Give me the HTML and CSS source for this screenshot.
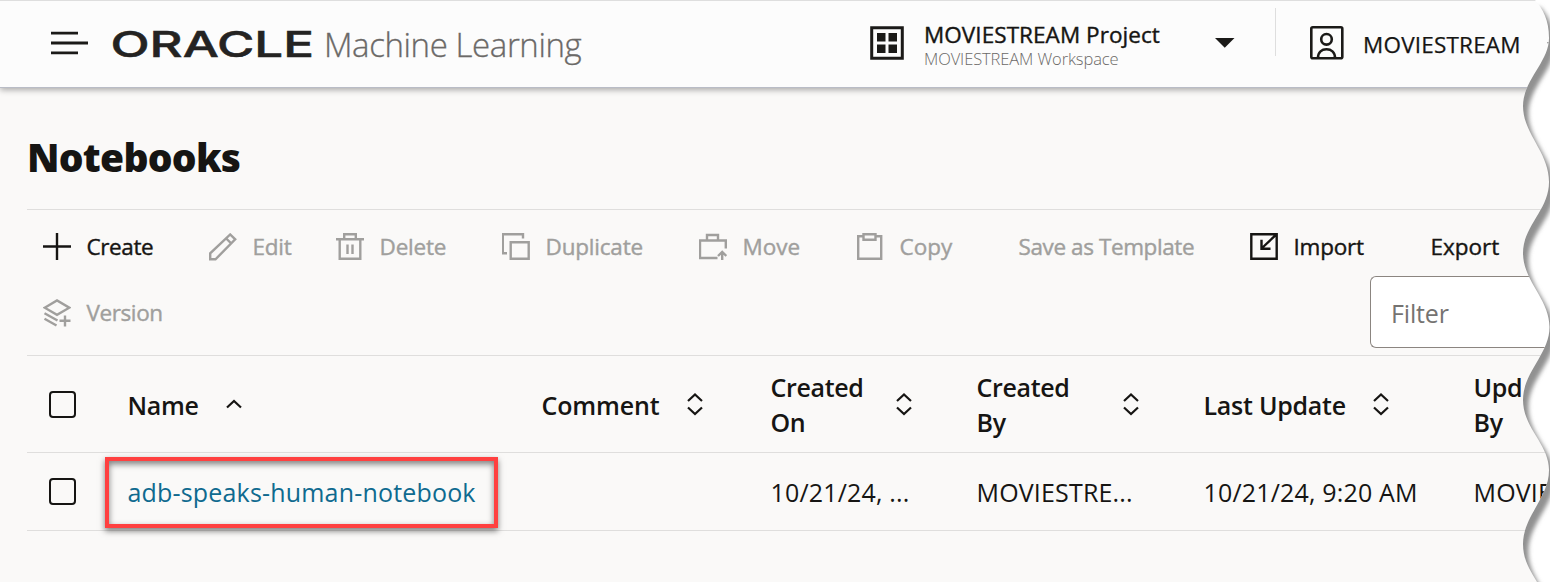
FILE: index.html
```html
<!DOCTYPE html>
<html lang="en">
<head>
<meta charset="utf-8">
<title>Oracle Machine Learning - Notebooks</title>
<link rel="stylesheet" href="styles.css">
</head>
<body>
<header class="topbar">
  <svg class="menu" width="38" height="24" viewBox="0 0 38 24"><path d="M0 2.200h27M0 12h37M0 21.900h27" stroke="#1b1a18" stroke-width="2.800" fill="none"/></svg>
  <svg class="logo" width="202" height="30" viewBox="0 0 202 30"><text x="-1.500" y="28" textLength="203.500" lengthAdjust="spacingAndGlyphs">ORACLE</text></svg>
  <span class="product">Machine Learning</span>
  <div class="project">
    <svg width="34" height="34" viewBox="0 0 34 34"><path d="M1.700 1.700h30.600v30.600H1.700z" fill="none" stroke="#1b1a18" stroke-width="3"/><path d="M7 7h8.500v8.500H7zM18.500 7h8.500v8.500h-8.500zM7 18.500h8.500V27H7zM18.500 18.500h8.500V27h-8.500z" fill="#1b1a18"/></svg>
    <div class="project-text">
      <div class="project-name">MOVIESTREAM Project</div>
      <div class="workspace">MOVIESTREAM Workspace</div>
    </div>
    <svg class="caret" width="20" height="10" viewBox="0 0 20 10"><path d="M0 0h19.500L9.750 9.800z" fill="#1b1a18"/></svg>
  </div>
  <div class="user">
    <svg width="34" height="34" viewBox="0 0 34 34" fill="none" stroke="#1b1a18" stroke-width="2.600"><rect x="1.300" y="1.300" width="31" height="31" rx="1.500"/><circle cx="16.500" cy="13.300" r="5.300"/><path d="M8 32c0-6 4-8.800 8.500-8.800s8.500 2.800 8.500 8.800"/></svg>
    <span class="user-name">MOVIESTREAM</span>
    <svg class="user-caret" width="20" height="10" viewBox="0 0 20 10"><path d="M0 0h19.500L9.750 9.800z" fill="#1b1a18"/></svg>
  </div>
</header>
<main class="page">
  <h1 class="title">Notebooks</h1>
  <div class="toolbar">
    <div class="tool on create"><svg width="28" height="28"><path d="M14 0v27M0 13.500h28"/></svg><span>Create</span></div>
    <div class="tool"><svg width="28" height="28"><path d="M1.200 26.300v-6L21.200 1.500l5 4.800L6.500 26.300zM17.200 5.500l5 4.800"/></svg><span>Edit</span></div>
    <div class="tool"><svg width="28" height="28"><path d="M0 6.200h28M3.700 6.500v19.300h20.600V6.500M8.200 6V1.200h11.600V6M11.500 11.500V21M16.500 11.500V21"/></svg><span>Delete</span></div>
    <div class="tool"><svg width="28" height="28"><path d="M5 20.300H.8V1.200h20.200V5.500M8.700 9.200h18v16.600h-18z"/></svg><span>Duplicate</span></div>
    <div class="tool loose"><svg width="28" height="28"><path d="M18.500 25H1V7.500h25.800V15.500M8 7V2h11v5M23.200 27v-7M19 23l4.200-4 4.200 4"/></svg><span>Move</span></div>
    <div class="tool loose"><svg width="28" height="28"><path d="M7.500 3.200H2.200v22.600h23V3.200h-5.200M7.500 1.200h12v5.600h-12z"/></svg><span>Copy</span></div>
    <div class="tool template"><span>Save as Template</span></div>
    <div class="tool on"><svg width="28" height="28"><path d="M1.300 1.300h25.400v24.400H1.300zM26.500 1.300L11.500 15.500M11.500 6.700v9H20.500"/></svg><span>Import</span></div>
    <div class="tool on export"><span>Export</span></div>
    <div class="tool version"><svg width="28" height="28"><path d="M1.700 8.700L14 1.500l12.300 7.200L14 15.900zM1.500 14.200l13 7.300M1.500 19.700l12 6.800M16.500 21.800h11M22 16.500v11"/></svg><span>Version</span></div>
    <div class="filter">Filter</div>
  </div>
  <div class="grid head">
    <div><i class="check"></i></div>
    <div class="cell name"><span>Name</span><svg class="sort" width="16" height="24"><path d="M1 15.500l7-6.500 7 6.500"/></svg></div>
    <div class="cell comment"><span>Comment</span><svg class="sort" width="16" height="24"><path d="M1 9l7-6.500L15 9M1 15.500l7 6.500 7-6.500"/></svg></div>
    <div class="cell created-on"><div>Created<br>On</div><svg class="sort" width="16" height="24"><path d="M1 9l7-6.500L15 9M1 15.500l7 6.500 7-6.500"/></svg></div>
    <div class="cell created-by"><div>Created<br>By</div><svg class="sort" width="16" height="24"><path d="M1 9l7-6.500L15 9M1 15.500l7 6.500 7-6.500"/></svg></div>
    <div class="cell last"><span>Last Update</span><svg class="sort" width="16" height="24"><path d="M1 9l7-6.500L15 9M1 15.500l7 6.500 7-6.500"/></svg></div>
    <div class="cell"><div>Upd<br>By</div></div>
  </div>
  <div class="grid row">
    <div><i class="check"></i></div>
    <div class="link">adb-speaks-human-notebook<div class="highlight"></div></div>
    <div></div>
    <div>10/21/24, ...</div>
    <div>MOVIESTRE...</div>
    <div>10/21/24, 9:20 AM</div>
    <div>MOVIE</div>
  </div>
</main>
<svg class="torn" width="50" height="582" viewBox="0 0 50 582">
  <defs>
    <clipPath id="paper"><path d="M35 0C43 9 49 20 49 38C49 62 23 80 23 106C23 134 49 152 49 182C49 210 23 226 23 253C23 281 49.500 299 49.500 327C49.500 354 23 372 23 400C23 428 49 444 49 470C49 498 23 516 23 544C23 560 30 570 37 582H50V0z"/></clipPath>
    <filter id="soft" x="-50%" y="-5%" width="200%" height="110%"><feGaussianBlur stdDeviation="2"/></filter>
  </defs>
  <g clip-path="url(#paper)">
    <path d="M0 0h50v582H0z" fill="#fff"/>
    <path filter="url(#soft)" transform="translate(5.500 7.500)" fill="#919191" d="M-40 0H35C43 9 49 20 49 38C49 62 23 80 23 106C23 134 49 152 49 182C49 210 23 226 23 253C23 281 49.500 299 49.500 327C49.500 354 23 372 23 400C23 428 49 444 49 470C49 498 23 516 23 544C23 560 30 570 37 582H-40z"/>
  </g>
</svg>
</body>
</html>
```
FILE: styles.css
```css
* { box-sizing: border-box; }
body {
  margin: 0;
  width: 1550px;
  height: 582px;
  overflow: hidden;
  background: #faf9f8;
  color: #161513;
  font-family: "Open Sans", "Noto Sans", sans-serif;
  position: relative;
}
svg { display: block; flex: none; }

/* Top bar */
.topbar {
  height: 88px;
  display: flex;
  align-items: flex-start;
  padding-left: 51px;
  background: #fcfcfc;
  border-top: 1px solid #dedede;
  border-bottom: 1px solid #b9bcc6;
  box-shadow: 0 2px 6px rgba(0, 0, 0, .32);
  white-space: nowrap;
}
.menu { margin-top: 30px; }
.logo { margin: 28px 0 0 23px; overflow: visible; }
.logo text { font: 500 36px "Inter", sans-serif; fill: #242322; stroke: #242322; stroke-width: .5px; }
.product {
  width: 546px;
  margin: 24px 0 0 10px;
  font-size: 33px;
  line-height: 40px;
  font-weight: 300;
  letter-spacing: -.4px;
  color: #6b6967;
  -webkit-text-stroke: .3px #6b6967;
}
.project { display: flex; margin-top: 25px; width: 405px; }
.project-text { width: 291px; margin: -4px 0 0 20px; }
.project-name { font-size: 22.500px; line-height: 26px; letter-spacing: .06px; -webkit-text-stroke: .4px #161513; }
.workspace { font-size: 16.500px; line-height: 22px; font-weight: 300; letter-spacing: -.1px; color: #6b6967; }
.caret { margin-top: 12px; }
.user { display: flex; padding: 18px 0 12px 34px; width: 274px; height: 48px; margin-top: 7px; border-left: 1px solid #dedede; overflow: visible; }
.user-name { font-size: 22.500px; line-height: 30px; margin: 4px 0 0 19px; width: 184px; letter-spacing: .2px; -webkit-text-stroke: .25px #161513; }
.user-caret { width: 2px; margin-top: 12px; }

/* Page heading and toolbar */
.page { padding: 45px 0 0 27px; }
.title { margin: 0; height: 76px; font-size: 39px; line-height: 48px; font-weight: 800; letter-spacing: -.76px; }
.toolbar {
  display: grid;
  grid-template-columns: 166px 127px 166px 197px 157px 162px 232px 180px minmax(0, 1fr);
  grid-template-rows: 66px 79px;
  border-top: 1px solid #dfdedd;
  padding-left: 16px;
}
.tool {
  display: flex;
  gap: 16px;
  height: 28px;
  margin-top: 23px;
  line-height: 28px;
  font-size: 22.500px;
  letter-spacing: -.2px;
  color: #a09f9d;
  white-space: nowrap;
  -webkit-text-stroke: .4px currentColor;
}
.tool span { margin-left: -.5px; }
.tool.loose { letter-spacing: -.02px; }
.tool.create, .tool.template, .tool.version { letter-spacing: -.4px; }
.tool.template, .tool.export { padding-left: 1px; }
.tool.export { letter-spacing: 0; }
.tool svg path { fill: none; stroke: #a09f9d; stroke-width: 2.400; }
.tool.on { color: #161513; }
.tool.on svg path { stroke: #161513; }
.filter {
  grid-column: 7 / -1;
  height: 72px;
  margin-left: 352px;
  padding-left: 20px;
  border: 1px solid #8b8580;
  border-right: 0;
  border-radius: 6px 0 0 6px;
  background: #fff;
  color: #757371;
  font-size: 25px;
  line-height: 73px;
  letter-spacing: -.15px;
}

/* Notebook table */
.grid {
  display: grid;
  grid-template-columns: 100.500px 414px 229px 206px 227px 270px minmax(0, 1fr);
  align-items: center;
  border-top: 1px solid #dfdedd;
  font-size: 25px;
  white-space: nowrap;
  letter-spacing: .17px;
}
.head { height: 97px; font-weight: 600; line-height: 35px; letter-spacing: -.35px; }
.row { height: 79px; border-bottom: 1px solid #dfdedd; }
.cell { display: flex; align-items: center; gap: 28px; padding-top: 2px; }
.cell.comment { letter-spacing: -.15px; }
.cell.last { letter-spacing: -.25px; gap: 27px; }
.cell.created-on { gap: 33px; }
.cell.created-by { gap: 54px; }
.check { display: block; width: 27px; height: 27px; border: 2px solid #161513; border-radius: 4px; margin-left: 22px; }
.sort { margin-top: -2px; fill: none; stroke: #161513; stroke-width: 2.200; }
.link { color: #0f6a8f; position: relative; letter-spacing: .18px; }
.highlight {
  position: absolute;
  left: -22.500px;
  top: -18px;
  width: 393px;
  height: 71px;
  border: 4px solid #ff4040;
  box-shadow: 0 3px 6px rgba(0, 0, 0, .5), inset 0 3px 6px rgba(0, 0, 0, .5);
}

/* Torn paper edge over the right side */
.torn { position: absolute; right: 0; top: 0; }
```
